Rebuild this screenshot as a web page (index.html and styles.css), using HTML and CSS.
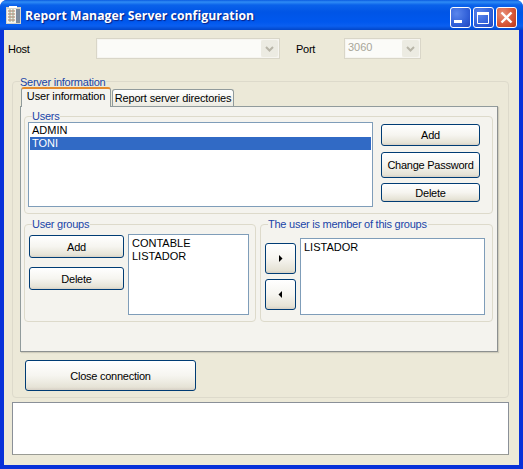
FILE: index.html
```html
<!DOCTYPE html>
<html lang="en">
<head>
<meta charset="utf-8">
<title>Report Manager Server configuration</title>
<link rel="stylesheet" href="styles.css">
</head>
<body>
<div class="window">
  <header class="titlebar">
    <svg class="app-icon" width="16" height="18" viewBox="0 0 16 18">
      <rect x="0" y="1" width="15" height="17" fill="#d8d4c8"/>
      <rect x="1" y="3" width="9" height="14" fill="#f6f4ee"/>
      <rect x="10" y="3" width="4" height="14" fill="#7d8a9c"/>
      <path d="M2 5h7M2 8h7M2 11h7M2 14h7" stroke="#b0705a" stroke-width="1"/>
      <path d="M4 3v13M7 3v13" stroke="#9aa88e" stroke-width="1"/>
      <rect x="3" y="0" width="8" height="2" fill="#fff"/>
    </svg>
    <span class="title">Report Manager Server configuration</span>
    <div class="controls">
      <span class="ctl ctl-blue"><svg width="21" height="21" viewBox="0 0 21 21"><rect x="4" y="13" width="8" height="3" fill="#fff"/></svg></span>
      <span class="ctl ctl-blue"><svg width="21" height="21" viewBox="0 0 21 21"><path d="M4.5 6.5h11v10h-11z" fill="none" stroke="#fff"/><rect x="4" y="5" width="12" height="3" fill="#fff"/></svg></span>
      <span class="ctl ctl-red"><svg width="21" height="21" viewBox="0 0 21 21"><path d="M5.5 5.5l10 10M15.5 5.5l-10 10" stroke="#fff" stroke-width="2.4"/></svg></span>
    </div>
  </header>
  <main class="client">
    <div class="conn-row">
      <span class="conn-label host-label">Host</span>
      <div class="combo combo-host"><span class="combo-text"></span><span class="combo-btn"><svg width="9" height="6" viewBox="0 0 9 6"><path d="M1 1l3.5 3.5L8 1" fill="none" stroke="#b8b5a8" stroke-width="2"/></svg></span></div>
      <span class="conn-label port-label">Port</span>
      <div class="combo combo-port"><span class="combo-text">3060</span><span class="combo-btn"><svg width="9" height="6" viewBox="0 0 9 6"><path d="M1 1l3.5 3.5L8 1" fill="none" stroke="#b8b5a8" stroke-width="2"/></svg></span></div>
    </div>

    <section class="group outer">
      <span class="legend legend-outer">Server information</span>
      <div class="tabs">
        <span class="tab tab-active">User information</span>
        <span class="tab">Report server directories</span>
      </div>
      <div class="panel">
        <section class="group users">
          <span class="legend">Users</span>
          <ul class="list users-list">
            <li>ADMIN</li>
            <li class="selected">TONI</li>
          </ul>
          <div class="users-actions">
            <button class="btn btn-add">Add</button>
            <button class="btn btn-pass">Change Password</button>
            <button class="btn btn-del">Delete</button>
          </div>
        </section>
        <div class="lower">
          <section class="group user-groups">
            <span class="legend">User groups</span>
            <div class="groups-actions">
              <button class="btn btn-wide">Add</button>
              <button class="btn btn-wide">Delete</button>
            </div>
            <ul class="list groups-list">
              <li>CONTABLE</li>
              <li>LISTADOR</li>
            </ul>
          </section>
          <section class="group member">
            <span class="legend">The user is member of this groups</span>
            <div class="arrows">
              <button class="btn btn-arrow"><svg width="5" height="7" viewBox="0 0 5 7"><path d="M1 0l3.5 3.5L1 7z" fill="#000"/></svg></button>
              <button class="btn btn-arrow"><svg width="5" height="7" viewBox="0 0 5 7"><path d="M4 0L.5 3.5 4 7z" fill="#000"/></svg></button>
            </div>
            <ul class="list member-list">
              <li>LISTADOR</li>
            </ul>
          </section>
        </div>
      </div>
      <button class="btn btn-close">Close connection</button>
    </section>
    <div class="status"></div>
  </main>
</div>
</body>
</html>
```

FILE: styles.css
```css
* { box-sizing: border-box; }
html, body { margin: 0; padding: 0; }
body {
  width: 523px;
  height: 469px;
  overflow: hidden;
  font-family: "Liberation Sans", Arial, sans-serif;
  font-size: 11px;
  letter-spacing: -0.25px;
  color: #000;
}
.window {
  width: 523px;
  height: 469px;
  display: flex;
  flex-direction: column;
  background: #0831d9;
  border-radius: 7px 7px 0 0;
  overflow: hidden;
}
.titlebar {
  height: 30px;
  flex: none;
  display: flex;
  align-items: center;
  padding: 0 6px 0 6px;
  background: linear-gradient(to bottom, #0a5be0 0, #2f8cf5 2px, #0a62ea 5px, #0055e6 12px, #0058ee 22px, #0a5ff0 26px, #0246c8 30px);
}
.app-icon { flex: none; margin-top: -1px; }
.title {
  margin-left: 3px;
  color: #fff;
  font-family: "Open Sans", sans-serif;
  font-weight: 700;
  font-size: 12.2px;
  letter-spacing: 0.08px;
  text-shadow: 1px 1px 1px #0a1f80;
  white-space: nowrap;
}
.controls { margin-left: auto; display: flex; gap: 2px; margin-top: 4px; }
.ctl {
  width: 21px;
  height: 21px;
  display: block;
  border: 1px solid #fff;
  border-radius: 3px;
  overflow: hidden;
}
.ctl svg { display: block; margin: -1px; }
.ctl-blue { background: radial-gradient(circle at 30% 30%, #5a86ec 0, #3160d8 60%, #2246bc 100%); }
.ctl-red { background: radial-gradient(circle at 30% 30%, #e89078 0, #d8583a 55%, #b83818 100%); }

.client {
  flex: none;
  margin: 0 4px;
  height: 435px;
  background: #ece9d8;
  display: flow-root;
}
.conn-row {
  display: flex;
  align-items: center;
  height: 21px;
  margin-top: 8px;
  padding-left: 4px;
}
.conn-label { display: block; }
.host-label { width: 88px; }
.port-label { width: 48px; margin-left: 16px; }
.combo {
  height: 21px;
  display: flex;
  align-items: center;
  justify-content: space-between;
  border: 1px solid #d9d6c8;
  background: #f6f5f0;
  padding: 1px;
}
.combo-host { width: 184px; }
.combo-port { width: 77px; }
.combo-text { flex: 1; color: #a8a698; padding-left: 2px; line-height: 15px; height: 17px; background: #fbfbf8; letter-spacing: 0; }
.combo-btn {
  width: 17px;
  height: 17px;
  display: flex;
  align-items: center;
  justify-content: center;
  background: #ecebe2;
  border-radius: 2px;
}
.group {
  position: relative;
  border: 1px solid #dddacb;
  border-radius: 4px;
}
.legend {
  position: absolute;
  left: 7px;
  top: -7px;
  height: 12px;
  line-height: 12px;
  padding-right: 1px;
  color: #1a45a8;
  background: #f4f3ee;
  white-space: nowrap;
}
.legend-outer { background: #ece9d8; left: 7px; top: -6px; }
.outer {
  margin: 22px 0 0 8px;
  width: 497px;
  height: 317px;
  padding: 5px 0 0 7px;
}
.tabs {
  display: flex;
  align-items: flex-end;
  height: 19px;
  padding-left: 1px;
  gap: 1px;
}
.tab {
  position: relative;
  height: 17px;
  line-height: 16px;
  padding: 0;
  width: 122px;
  white-space: nowrap;
  text-align: center;
  letter-spacing: -0.15px;
  background: linear-gradient(to bottom, #fff, #ecebe2);
  border: 1px solid #919b9c;
  border-bottom: 0;
  border-radius: 3px 3px 0 0;
}
.tab-active {
  width: 90px;
  height: 20px;
  line-height: 15px;
  background: #f4f3ee;
  margin-bottom: -1px;
  border-top: 2px solid #e68b2c;
  z-index: 1;
  border-bottom: 0;
}
.panel {
  width: 478px;
  height: 246px;
  background: #f4f3ee;
  border: 1px solid #919b9c;
  border-right-color: #8c9090;
  border-bottom-color: #8c9090;
  padding: 9px 0 0 3px;
  box-shadow: 1px 1px 1px #cfccbc;
}
.users {
  width: 469px;
  height: 98px;
  display: flex;
  align-items: flex-start;
  padding: 5px 0 0 3px;
}
.list {
  margin: 0;
  padding: 2px;
  list-style: none;
  background: #fff;
  border: 1px solid #7f9db9;
  line-height: 13px;
  letter-spacing: 0;
}
.users-list { width: 345px; height: 85px; padding: 1px; }
.users-list li { padding-left: 2px; height: 13px; }
.users-list .selected { background: #316ac5; color: #fff; }
.users-actions {
  margin-left: 8px;
  padding-top: 2px;
  display: flex;
  flex-direction: column;
  width: 99px;
}
.btn {
  display: flex;
  align-items: center;
  justify-content: center;
  margin: 0;
  padding: 0;
  font: inherit;
  letter-spacing: inherit;
  color: #000;
  border: 1px solid #003c74;
  border-radius: 3px;
  background: linear-gradient(to bottom, #fff 0, #f6f5f0 50%, #e6e3d6 90%, #d6d0c5 100%);
  white-space: nowrap;
}
.btn-add { height: 22px; }
.btn-pass { height: 26px; margin-top: 6px; }
.btn-del { height: 19px; margin-top: 5px; }
.lower {
  display: flex;
  gap: 4px;
  margin-top: 10px;
}
.user-groups {
  width: 232px;
  height: 98px;
  display: flex;
  align-items: flex-start;
  padding: 9px 0 0 4px;
}
.groups-actions {
  width: 95px;
  margin-top: 1px;
  display: flex;
  flex-direction: column;
  gap: 9px;
}
.btn-wide { height: 23px; }
.groups-list { width: 121px; height: 81px; margin-left: 4px; padding: 2px 3px; }
.member {
  width: 233px;
  height: 98px;
  display: flex;
  align-items: flex-start;
  padding: 13px 0 0 4px;
}
.arrows {
  width: 31px;
  margin-top: 5px;
  display: flex;
  flex-direction: column;
  gap: 5px;
}
.btn-arrow { height: 31px; }
.member-list { width: 185px; height: 77px; margin-left: 4px; padding: 2px 3px; }
.btn-close {
  width: 171px;
  height: 31px;
  margin: 8px 0 0 5px;
}
.status {
  width: 497px;
  height: 53px;
  margin: 4px 0 0 8px;
  background: #fff;
  border: 1px solid #8a9098;
  border-bottom-color: #9a9c94;
}
```
